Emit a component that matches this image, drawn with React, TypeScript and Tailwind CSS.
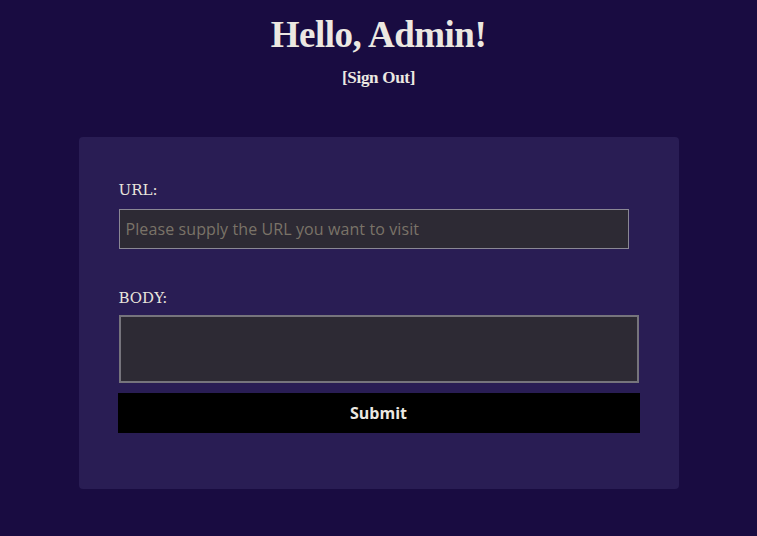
import React from "react";

export default function App() {
  return (
    <div className="min-h-[536px] w-full bg-[#190c41] text-[#ece8e1] flex flex-col items-center">
      <h1 className="mt-[14px] text-[37px] leading-[42px] font-bold tracking-[-0.5px] font-['Liberation_Serif',serif]">
        Hello, Admin!
      </h1>
      <a className="mt-[12px] text-[17px] leading-[20px] font-bold tracking-[-0.3px] font-['Liberation_Serif',serif]">
        [Sign Out]
      </a>
      <div className="mt-[49px] w-[600px] h-[352px] rounded-[4px] bg-[#291d54] pl-[40px] pt-[44px] flex flex-col items-start">
        <label className="block text-[15px] leading-[18px] text-[#e8e4dc] font-['DejaVu_Serif',serif]">
          URL:
        </label>
        <input
          className="mt-[10px] block w-[510px] h-[40px] bg-[#2d2a34] border border-[#8a8794] px-[6px] text-[16px] tracking-[0.1px] text-[#ddd] placeholder:text-[#7a7368] outline-none font-['Open_Sans',sans-serif]"
          placeholder="Please supply the URL you want to visit"
        />
        <label className="block mt-[40px] text-[15px] leading-[18px] text-[#e8e4dc] font-['DejaVu_Serif',serif]">
          BODY:
        </label>
        <textarea className="mt-[8px] block w-[520px] h-[68px] bg-[#2d2a34] border-2 border-[#76747c] resize-none outline-none" />
        <button className="mt-[10px] -ml-[1px] block w-[522px] h-[40px] bg-black text-[#ece8e1] text-[16px] font-bold font-['Open_Sans',sans-serif]">
          Submit
        </button>
      </div>
    </div>
  );
}
